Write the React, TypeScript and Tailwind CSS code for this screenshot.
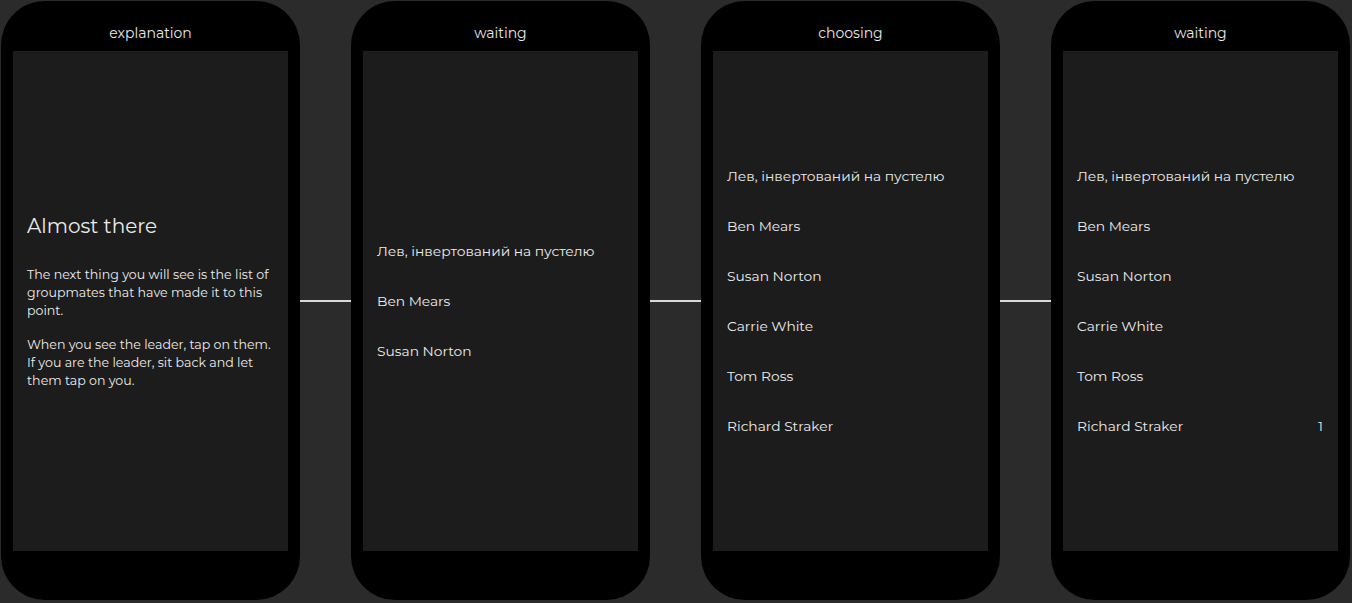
const font = { fontFamily: "Montserrat, 'DejaVu Sans', sans-serif" };

type Row = { name: string; count?: string };

function Phone({ title, children }: { title: string; children: React.ReactNode }) {
  return (
    <div className="flex h-[599px] w-[299px] shrink-0 flex-col rounded-[44px] bg-black px-3">
      <div className="flex h-[50px] shrink-0 items-center justify-center pt-[15px] text-[14px] text-[#e8e8e8]">
        {title}
      </div>
      <div className="flex h-[500px] shrink-0 flex-col justify-center bg-[#1c1c1c]">{children}</div>
    </div>
  );
}

function Connector() {
  return (
    <div className="flex h-[599px] w-[51px] shrink-0 items-center">
      <div className="h-[2px] w-full bg-[#d9d9d9]" />
    </div>
  );
}

function List({ rows }: { rows: Row[] }) {
  return (
    <ul>
      {rows.map((r) => (
        <li key={r.name} className="flex h-[50px] items-center justify-between pl-[14px] pr-[15px] text-[13.8px] text-[#ececec]">
          <span>{r.name}</span>
          {r.count && <span>{r.count}</span>}
        </li>
      ))}
    </ul>
  );
}

const few: Row[] = [{ name: "Лев, інвертований на пустелю" }, { name: "Ben Mears" }, { name: "Susan Norton" }];
const all: Row[] = [...few, { name: "Carrie White" }, { name: "Tom Ross" }, { name: "Richard Straker" }];
const counted: Row[] = all.map((r) => (r.name === "Richard Straker" ? { ...r, count: "1" } : r));

export default function App() {
  return (
    <div style={font} className="flex h-[603px] w-[1352px] items-start bg-[#2b2b2b] pl-px pt-px">
      <Phone title="explanation">
        <div className="px-[14px] text-[#ececec]">
          <h1 className="text-[20px] leading-[28px]">Almost there</h1>
          <p className="mt-[26px] text-[12.6px] leading-[18px]">
            The next thing you will see is the list of groupmates that have made it to this point.
          </p>
          <p className="mt-[16px] text-[12.6px] leading-[18px]">
            When you see the leader, tap on them. If you are the leader, sit back and let them tap on you.
          </p>
        </div>
      </Phone>
      <Connector />
      <Phone title="waiting">
        <List rows={few} />
      </Phone>
      <Connector />
      <Phone title="choosing">
        <List rows={all} />
      </Phone>
      <Connector />
      <Phone title="waiting">
        <List rows={counted} />
      </Phone>
    </div>
  );
}
